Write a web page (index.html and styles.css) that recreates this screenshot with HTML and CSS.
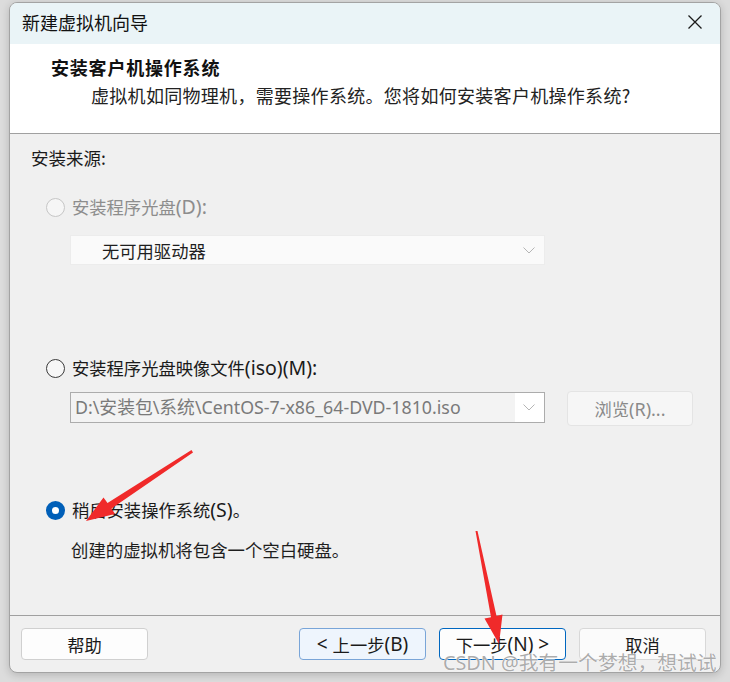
FILE: index.html
```html
<!DOCTYPE html>
<html lang="zh-CN">
<head>
<meta charset="utf-8">
<title>新建虚拟机向导</title>
<link rel="stylesheet" href="styles.css">
</head>
<body>
<div class="window">
  <div class="titlebar">
    <span class="title">新建虚拟机向导</span>
    <svg class="close" width="16" height="16" viewBox="0 0 16 16"><path d="M1.5 1.5 L14.5 14.5 M14.5 1.5 L1.5 14.5" stroke="#1b1b1b" stroke-width="1.3" fill="none"/></svg>
  </div>
  <div class="header">
    <div class="h-title">安装客户机操作系统</div>
    <div class="h-sub">虚拟机如同物理机，需要操作系统。您将如何安装客户机操作系统?</div>
  </div>
  <div class="content">
    <div class="src-label">安装来源:</div>
    <div class="radio-row r1 disabled"><span class="radio"></span><span>安装程序光盘<span class="lat">(D):</span></span></div>
    <div class="select sel1"><span class="sel-text">无可用驱动器</span><svg class="chev" width="12" height="7" viewBox="0 0 12 7"><path d="M0.5 0.5 L6 6 L11.5 0.5" stroke="#b5b5b5" stroke-width="1" fill="none"/></svg></div>
    <div class="radio-row r2"><span class="radio"></span><span>安装程序光盘映像文件<span class="lat">(iso)(M):</span></span></div>
    <div class="iso-row">
      <div class="select sel2"><span class="sel-text">D:\安装包\系统\CentOS-7-x86_64-DVD-1810.iso</span><svg class="chev" width="12" height="7" viewBox="0 0 12 7"><path d="M0.5 0.5 L6 6 L11.5 0.5" stroke="#b5b5b5" stroke-width="1" fill="none"/></svg></div>
      <div class="browse">浏览<span class="lat">(R)...</span></div>
    </div>
    <div class="radio-row r3"><span class="radio checked"></span><span>稍后安装操作系统<span class="lat">(S)</span>。</span></div>
    <div class="desc">创建的虚拟机将包含一个空白硬盘。</div>
  </div>
  <div class="footer">
    <div class="btn help">帮助</div>
    <div class="btn prev"><span class="lat">&lt;&nbsp;</span>上一步<span class="lat">(B)</span></div>
    <div class="btn next">下一步<span class="lat">(N)&nbsp;&gt;</span></div>
    <div class="btn cancel">取消</div>
  </div>
</div>
<svg class="arrows" width="730" height="682" viewBox="0 0 730 682">
  <polygon points="191.5,450 193,452.5 111.5,508.5 115,514 86,521 103.5,497.5 107.5,503" fill="#f02a2a"/>
  <polygon points="475.5,531 477.5,531 496.5,616 502.5,614.5 499,644 484.5,618.5 491,617.2" fill="#f02a2a"/>
</svg>
<div class="watermark">CSDN @我有一个梦想，想试试</div>
</body>
</html>
```
FILE: styles.css
```css
html, body {
  margin: 0;
  padding: 0;
}
body {
  width: 730px;
  height: 682px;
  overflow: hidden;
  position: relative;
  background: #dcdcdc;
  font-family: "Noto Sans", "Noto Sans CJK SC", sans-serif;
  color: #1a1a1a;
}
.window {
  box-sizing: border-box;
  width: 712px;
  height: 671px;
  margin: 2px 0 0 9px;
  border: 1px solid #a3a3a3;
  border-radius: 8px;
  background: #f0f0f0;
  box-shadow: 0 2px 8px rgba(0,0,0,0.18);
  display: flex;
  flex-direction: column;
  overflow: hidden;
}
.titlebar {
  height: 41px;
  flex: none;
  box-sizing: border-box;
  background: #eaf4f7;
  display: flex;
  align-items: center;
  justify-content: space-between;
  padding: 0 17px 3px 12px;
}
.title {
  font-size: 18px;
  font-family: "Noto Sans CJK SC", sans-serif;
  color: #111;
  line-height: 24px;
}
.header {
  height: 90px;
  flex: none;
  background: #ffffff;
  border-bottom: 1px solid #a0a0a0;
  padding: 11px 0 0 41px;
  box-sizing: border-box;
  font-family: "Noto Sans CJK SC", sans-serif;
}
.h-title {
  font-size: 18px;
  font-weight: 700;
  line-height: 24px;
  letter-spacing: 0.8px;
  color: #111;
}
.h-sub {
  font-size: 18px;
  line-height: 24px;
  letter-spacing: 0.3px;
  margin-top: 4px;
  padding-left: 40px;
  color: #222;
}
.content {
  height: 482px;
  flex: none;
  border-bottom: 1px solid #a0a0a0;
  padding: 12px 0 0 21px;
  box-sizing: border-box;
  font-size: 17px;
  display: flex;
  flex-direction: column;
  align-items: flex-start;
}
.lat {
  font-family: "Noto Sans", sans-serif;
  font-size: 19.5px;
}
.src-label {
  font-family: "Noto Sans CJK SC", sans-serif;
  line-height: 24px;
  font-size: 17.5px;
}
.radio-row {
  display: flex;
  align-items: center;
  height: 24px;
  line-height: 24px;
  gap: 7px;
  margin-left: 15px;
  font-size: 17.3px;
}
.r1 { margin-top: 25px; }
.r2 { margin-top: 91px; }
.r3 { margin-top: 72px; }
.disabled { color: #8d8d8d; }
.radio {
  box-sizing: border-box;
  width: 19px;
  height: 19px;
  border-radius: 50%;
  border: 1px solid #3a3a3a;
  background: #f7f7f7;
  flex: none;
}
.disabled .radio {
  border-color: #c6c6c6;
  background: #f6f6f6;
}
.radio.checked {
  border: 6px solid #005fb8;
  background: #ffffff;
}
.select {
  box-sizing: border-box;
  width: 475px;
  display: flex;
  align-items: center;
  justify-content: space-between;
  margin-left: 39px;
}
.sel1 {
  height: 30px;
  margin-top: 16px;
  background: #fafafa;
  border: 1px solid #ececec;
  padding: 0 9px 0 31px;
}
.sel1 .sel-text {
  font-family: "Noto Sans CJK SC", sans-serif;
  color: #1e1e1e;
  font-size: 17.3px;
}
.iso-row {
  display: flex;
  align-items: flex-start;
  gap: 22px;
  margin-top: 11px;
  height: 35px;
}
.sel2 {
  height: 31px;
  margin-top: 1px;
  border: 1px solid #acacac;
  background: #ffffff;
  padding: 0 9px 0 0;
}
.sel2 .sel-text {
  height: 29px;
  line-height: 29px;
  width: 444px;
  background: #f3f3f3;
  padding-left: 4px;
  box-sizing: border-box;
  color: #7a7a7a;
  font-size: 17.8px;
  white-space: nowrap;
  overflow: hidden;
}
.browse {
  box-sizing: border-box;
  width: 126px;
  height: 35px;
  border: 1px solid #e4e4e4;
  border-radius: 4px;
  background: #f6f6f6;
  color: #8a8a8a;
  display: flex;
  align-items: center;
  justify-content: center;
  font-size: 17.3px;
}
.browse .lat { font-size: 18px; }
.desc {
  margin-top: 16px;
  margin-left: 40px;
  line-height: 24px;
  font-family: "Noto Sans CJK SC", sans-serif;
  font-size: 17.4px;
  color: #1e1e1e;
}
.footer {
  flex: 1;
  display: flex;
  align-items: flex-start;
  padding: 12px 14px 0 11px;
  gap: 13px;
}
.btn {
  box-sizing: border-box;
  width: 127px;
  height: 32px;
  border-radius: 4px;
  border: 1px solid #d0d0d0;
  background: #fdfdfd;
  display: flex;
  align-items: center;
  justify-content: center;
  font-size: 17.3px;
  color: #1a1a1a;
  white-space: nowrap;
}
.btn .lat { font-size: 19px; }
.help { margin-right: auto; }
.prev {
  background: #eef5fd;
  border-color: #79a5d8;
}
.next {
  border-color: #0067c0;
  background: #fdfdfd;
}
.cancel {
  border-color: #d8d8d8;
  background: #fbfbfb;
}
.arrows {
  position: absolute;
  left: 0;
  top: 0;
  pointer-events: none;
}
.watermark {
  position: absolute;
  left: 443px;
  top: 651px;
  font-size: 19.8px;
  line-height: 24px;
  white-space: nowrap;
  color: rgba(150,150,150,0.8);
  text-shadow: 0 0 1px #ffffff, 0 0 1px #ffffff;
  font-family: "Noto Sans", "Noto Sans CJK SC", sans-serif;
}
```
